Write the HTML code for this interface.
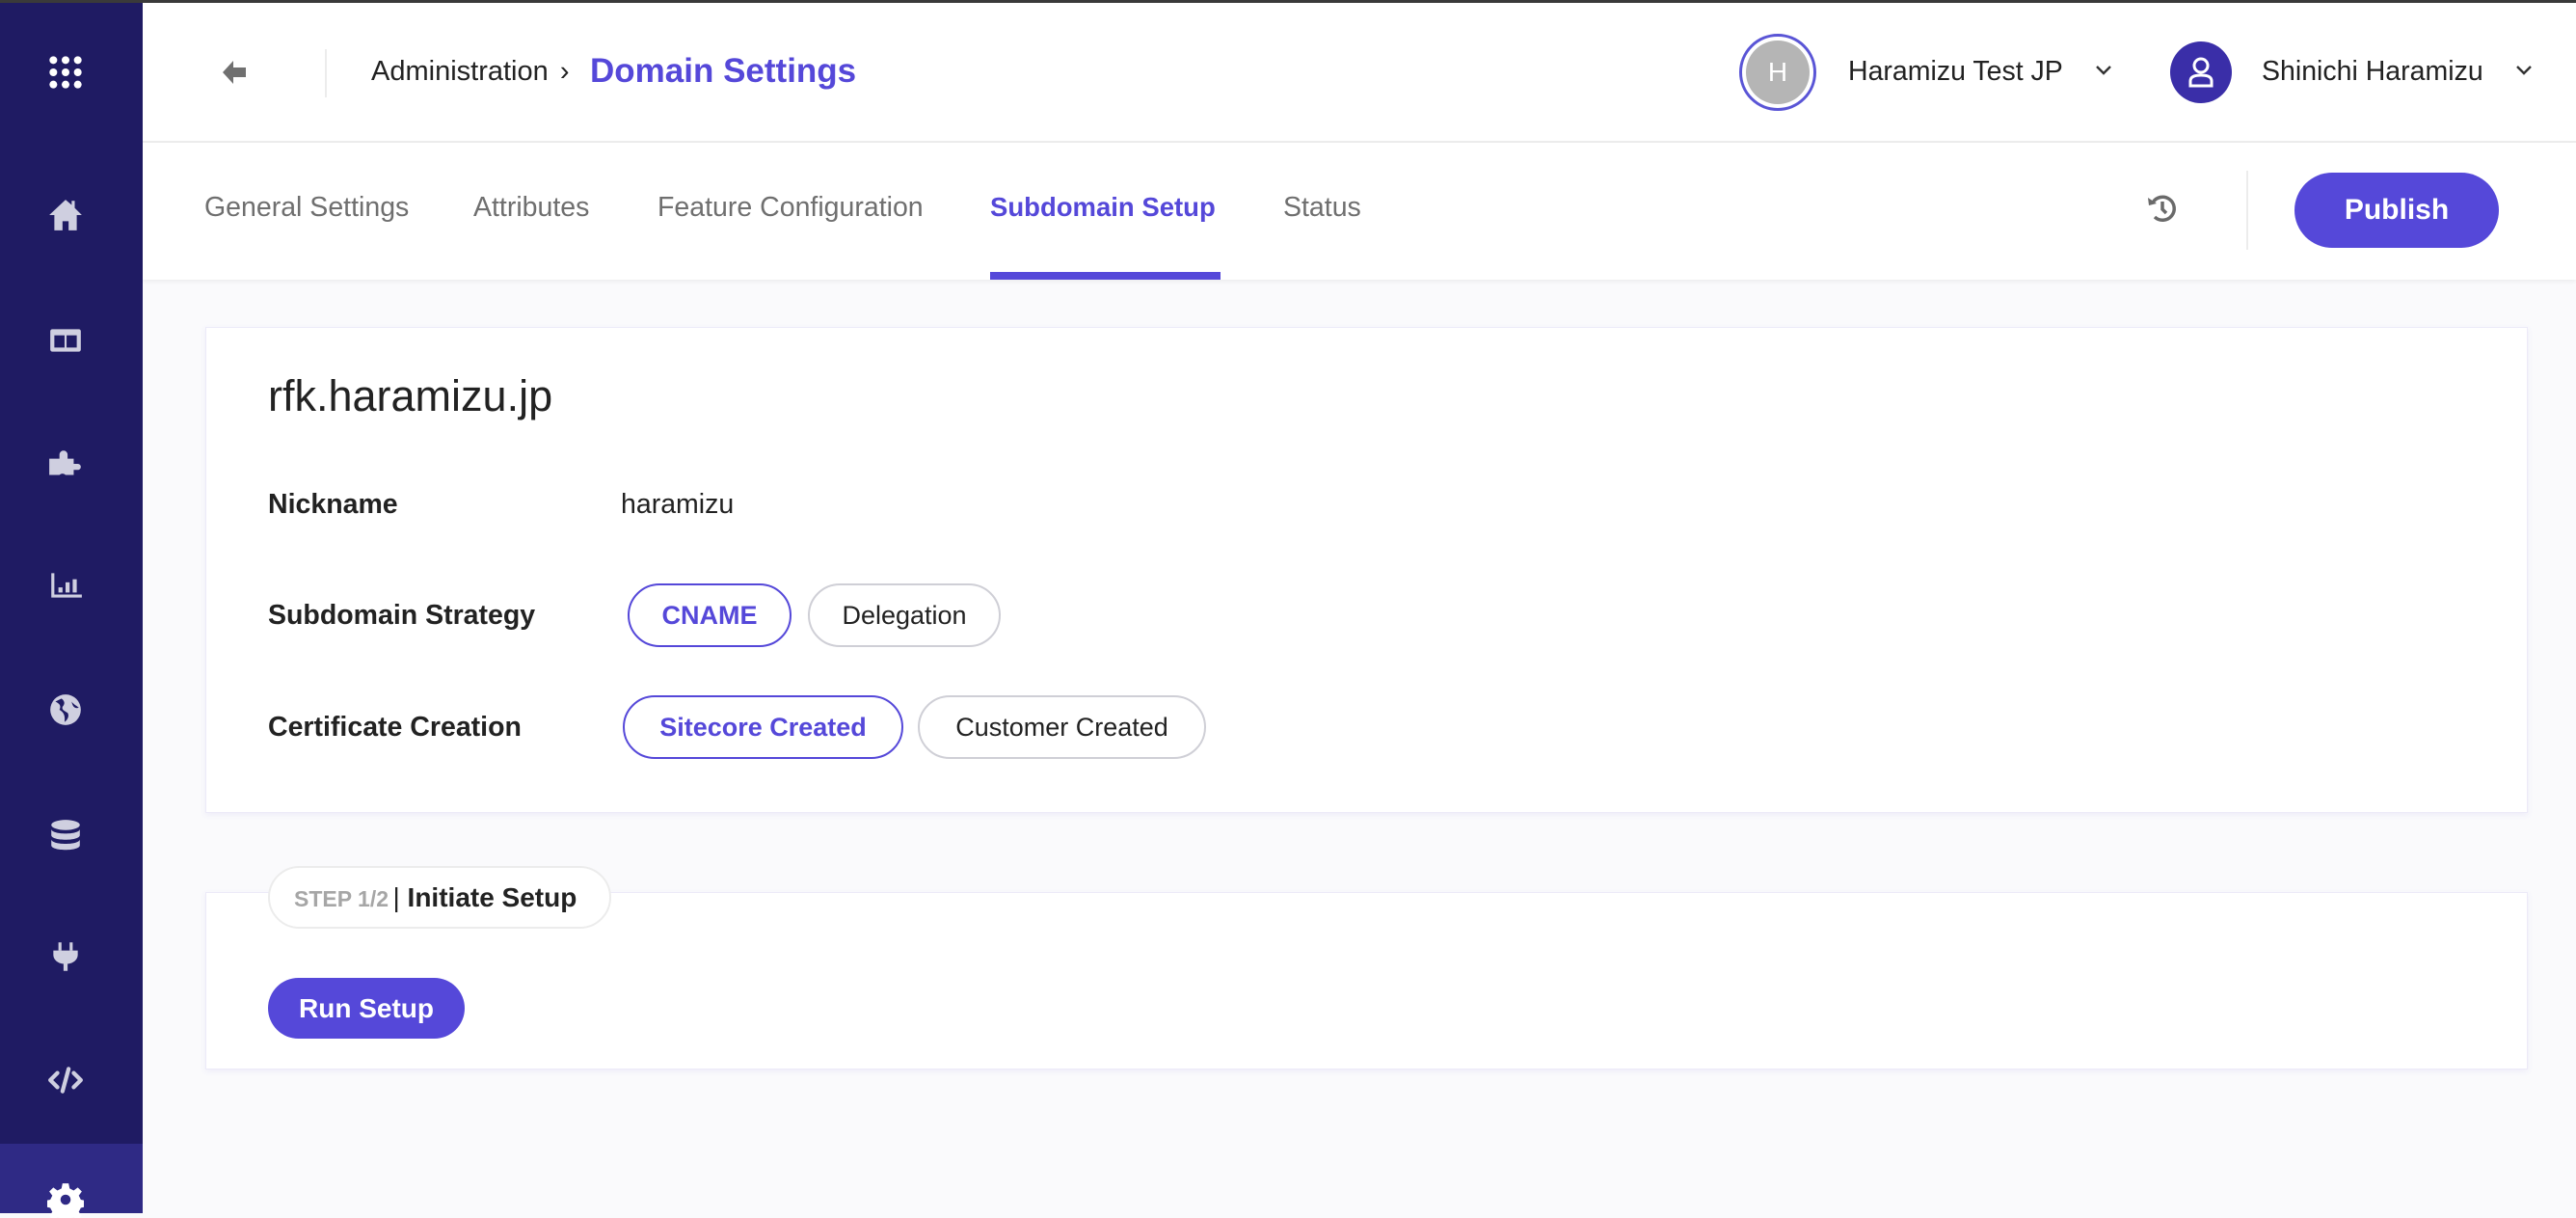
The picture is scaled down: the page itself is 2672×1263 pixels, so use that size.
<!DOCTYPE html>
<html><head><meta charset="utf-8"><style>
*{box-sizing:border-box;margin:0;padding:0}
body{width:2672px;height:1258px;overflow:hidden;background:#fafafc;font-family:"Liberation Sans",Arial,sans-serif;position:relative;color:#1f1f1f}
.abs{position:absolute}
#topline{left:0;top:0;width:2672px;height:3px;background:#3a3a3a}
#side{left:0;top:3px;width:148px;height:1255px;background:#1f1b63}
.ic{position:absolute;left:49px;width:38px;height:38px;margin-top:-19px}
#hdr{left:148px;top:3px;width:2524px;height:145px;background:#fff;border-bottom:2px solid #ececec}
#tabs{left:148px;top:148px;width:2524px;height:142px;background:#fff;box-shadow:0 2px 4px rgba(0,0,0,.06)}
.tab{position:absolute;top:198px;font-size:28.5px;color:#6f6f6f;line-height:34px;white-space:nowrap}
.card{position:absolute;left:213px;width:2409px;background:#fff;border:1px solid #eceaf8;box-shadow:0 2px 6px rgba(90,80,200,.08)}
.lbl{position:absolute;left:278px;font-size:28.5px;font-weight:bold;line-height:32px;color:#222}
.pill{position:absolute;height:66px;border-radius:33px;font-size:27px;line-height:62px;text-align:center;border:2px solid #cfcfd6;color:#222;background:#fff}
.pill.on{border-color:#5548d9;color:#5548d9;font-weight:bold}
</style></head><body>
<div id="topline" class="abs"></div>
<div id="side" class="abs">
 <svg class="ic" style="top:72px" viewBox="0 0 36 36" fill="#fff"><g><circle cx="6" cy="6" r="3.8"/><circle cx="18" cy="6" r="3.8"/><circle cx="30" cy="6" r="3.8"/><circle cx="6" cy="18" r="3.8"/><circle cx="18" cy="18" r="3.8"/><circle cx="30" cy="18" r="3.8"/><circle cx="6" cy="30" r="3.8"/><circle cx="18" cy="30" r="3.8"/><circle cx="30" cy="30" r="3.8"/></g></svg>
 <svg class="ic" style="top:220px" viewBox="0 0 36 36" fill="#cfcfe0"><path d="M18 3 L2 18 L7 18 L7 33 L15 33 L15 24 L21 24 L21 33 L29 33 L29 18 L34 18 L27 11 L27 4 L24 4 L24 8 Z"/></svg>
 <svg class="ic" style="top:350px" viewBox="0 0 36 36"><rect x="3" y="7" width="30" height="22" rx="2" fill="#cfcfe0"/><rect x="7" y="13" width="10" height="12" fill="#1f1b63"/><rect x="19" y="13" width="10" height="12" fill="#1f1b63"/></svg>
 <svg class="ic" style="top:479px" viewBox="0 0 36 36" fill="#cfcfe0"><path d="M2 12 H12 V8 a4 4 0 0 1 8 0 V12 H26 V17 H30 a3 3 0 0 1 0 6 H26 V28 H18 a4 4 0 0 0-6 0 H2 Z"/></svg>
 <svg class="ic" style="top:604px" viewBox="0 0 36 36" fill="#cfcfe0"><path d="M4 6 H7 V27 H34 V30 H4 Z"/><rect x="11" y="20" width="4" height="5"/><rect x="18" y="15" width="4" height="10"/><rect x="25" y="12" width="4" height="13"/></svg>
 <svg class="ic" style="top:733px" viewBox="0 0 36 36"><circle cx="18" cy="18" r="15" fill="#cfcfe0"/><path d="M8 10 C12 12 14 14 12 18 C15 20 18 22 17 30 C20 28 22 24 20 21 C17 19 14 18 15 15 C17 13 18 10 14 7 Z M24 10 C26 13 29 14 31 16 C28 17 25 16 24 10Z" fill="#1f1b63"/></svg>
 <svg class="ic" style="top:863px" viewBox="0 0 36 36" fill="#cfcfe0"><ellipse cx="18" cy="8" rx="14" ry="5"/><path d="M4 12 C4 18 32 18 32 12 V18 C32 24 4 24 4 18Z"/><path d="M4 22 C4 28 32 28 32 22 V28 C32 34 4 34 4 28Z"/></svg>
 <svg class="ic" style="top:989px" viewBox="0 0 36 36" fill="#cfcfe0"><rect x="11" y="4" width="3" height="8"/><rect x="22" y="4" width="3" height="8"/><path d="M6 12 H30 V16 C30 22 24 25 20 25 V32 H16 V25 C12 25 6 22 6 16Z"/></svg>
 <svg class="ic" style="top:1117px" viewBox="0 0 36 36" fill="none" stroke="#cfcfe0" stroke-width="4" stroke-linecap="round" stroke-linejoin="round"><path d="M10 11 L3 18 L10 25"/><path d="M26 11 L33 18 L26 25"/><path d="M21 7 L15 29"/></svg>
 <div class="abs" style="left:0;top:1183px;width:148px;height:72px;background:#2f2a85"></div>
 <svg class="ic" style="top:1241px" viewBox="0 0 36 36" fill="#fff"><path d="M15 2h6l1 5 4 2 4-3 4 4-3 4 2 4 5 1v6l-5 1-2 4 3 4-4 4-4-3-4 2-1 5h-6l-1-5-4-2-4 3-4-4 3-4-2-4-5-1v-6l5-1 2-4-3-4 4-4 4 3 4-2z"/><circle cx="18" cy="18" r="5" fill="#2f2a85"/></svg>
</div>
<div id="hdr" class="abs">
 <svg class="abs" style="left:80px;top:57px" width="30" height="30" viewBox="0 0 30 30"><path d="M14 3 L3 15 L14 27 L14 20 L27 20 L27 10 L14 10 Z" fill="#707070"/></svg>
 <div class="abs" style="left:189px;top:48px;width:2px;height:50px;background:#ececec"></div>
 <div class="abs" style="left:237px;top:54px;font-size:29px;line-height:34px;color:#222;white-space:nowrap">Administration <span style="margin:0 4px">›</span></div>
 <div class="abs" style="left:464px;top:50px;font-size:35px;line-height:42px;color:#5548d9;font-weight:bold">Domain Settings</div>
 <div class="abs" style="left:1656px;top:32px;width:80px;height:80px;border-radius:50%;border:3px solid #5a55d6;background:#fff"></div>
 <div class="abs" style="left:1663px;top:39px;width:66px;height:66px;border-radius:50%;background:#b5b5b5;color:#fff;font-size:28px;line-height:66px;text-align:center">H</div>
 <div class="abs" style="left:1769px;top:54px;font-size:28.5px;line-height:34px;color:#222;white-space:nowrap">Haramizu Test JP</div>
 <svg class="abs" style="left:2025px;top:64px" width="18" height="12" viewBox="0 0 18 12"><path d="M2 2 L9 9 L16 2" fill="none" stroke="#333" stroke-width="2.4"/></svg>
 <div class="abs" style="left:2103px;top:40px;width:64px;height:64px;border-radius:50%;background:#3a2ea8"></div>
 <svg class="abs" style="left:2120px;top:55px" width="30" height="34" viewBox="0 0 30 34" fill="none" stroke="#fff" stroke-width="3"><circle cx="15" cy="10" r="7"/><path d="M4 31 V26 C4 22 8 20 15 20 C22 20 26 22 26 26 V31 Z"/></svg>
 <div class="abs" style="left:2198px;top:54px;font-size:28.5px;line-height:34px;color:#222;white-space:nowrap">Shinichi Haramizu</div>
 <svg class="abs" style="left:2461px;top:64px" width="18" height="12" viewBox="0 0 18 12"><path d="M2 2 L9 9 L16 2" fill="none" stroke="#333" stroke-width="2.4"/></svg>
</div>
<div id="tabs" class="abs"></div>
<div class="tab" style="left:212px">General Settings</div>
<div class="tab" style="left:491px">Attributes</div>
<div class="tab" style="left:682px">Feature Configuration</div>
<div class="tab" style="left:1027px;color:#5548d9;font-weight:bold;font-size:27.5px">Subdomain Setup</div>
<div class="abs" style="left:1027px;top:282px;width:239px;height:8px;background:#5548d9"></div>
<div class="tab" style="left:1331px">Status</div>
<svg class="abs" style="left:2225px;top:198px" width="36" height="36" viewBox="0 0 36 36" fill="none" stroke="#6a6a6a" stroke-width="3.5"><path d="M8 12 A12 12 0 1 1 10 27"/><path d="M3 7 L4 15 L12 13 Z" fill="#6a6a6a" stroke="none"/><path d="M18 11 V19 L22 23"/></svg>
<div class="abs" style="left:2330px;top:177px;width:2px;height:82px;background:#ececec"></div>
<div class="abs" style="left:2380px;top:179px;width:212px;height:78px;border-radius:39px;background:#5548d9;color:#fff;font-size:30px;font-weight:bold;line-height:78px;text-align:center">Publish</div>

<div class="card" style="top:339px;height:504px"></div>
<div class="abs" style="left:278px;top:384px;font-size:45px;line-height:54px;color:#222">rfk.haramizu.jp</div>
<div class="lbl" style="top:507px">Nickname</div>
<div class="abs" style="left:644px;top:507px;font-size:28.5px;line-height:32px;color:#222">haramizu</div>
<div class="lbl" style="top:622px">Subdomain Strategy</div>
<div class="pill on" style="left:651px;top:605px;width:170px">CNAME</div>
<div class="pill" style="left:838px;top:605px;width:200px">Delegation</div>
<div class="lbl" style="top:738px">Certificate Creation</div>
<div class="pill on" style="left:646px;top:721px;width:291px">Sitecore Created</div>
<div class="pill" style="left:952px;top:721px;width:299px">Customer Created</div>

<div class="card" style="top:925px;height:184px"></div>
<div class="abs" style="left:278px;top:898px;width:356px;height:65px;border-radius:33px;border:2px solid #ececec;background:#fff;line-height:61px;padding-left:25px;white-space:nowrap"><span style="font-size:23px;color:#a6a6a6;font-weight:bold">STEP 1/2</span> <span style="font-size:28px;color:#222">| <b>Initiate Setup</b></span></div>
<div class="abs" style="left:278px;top:1014px;width:204px;height:63px;border-radius:32px;background:#5548d9;color:#fff;font-size:28px;font-weight:bold;line-height:63px;text-align:center">Run Setup</div>
</body></html>
